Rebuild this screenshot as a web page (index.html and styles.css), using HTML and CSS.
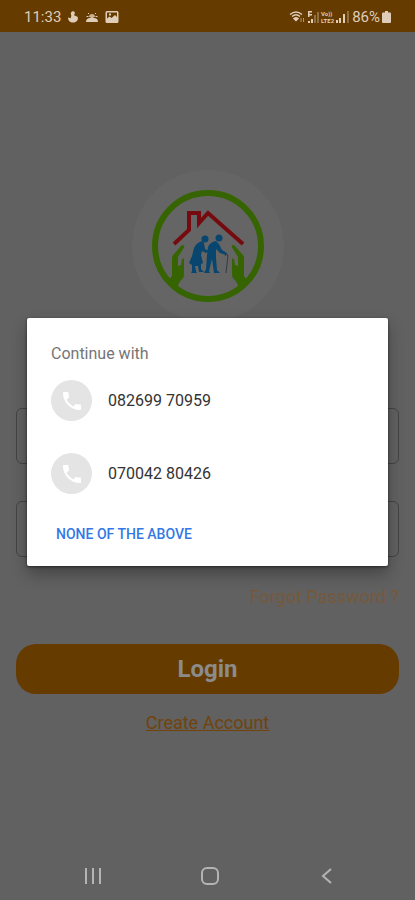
FILE: index.html
```html
<!DOCTYPE html>
<html lang="en">
<head>
<meta charset="utf-8">
<meta name="viewport" content="width=device-width, initial-scale=1">
<title>Login</title>
<link rel="stylesheet" href="styles.css">
</head>
<body>
<div class="screen">
  <header class="status">
    <div class="status-group">
      <span>11:33</span>
      <svg width="12" height="14" viewBox="0 0 12 14" fill="currentColor"><path d="M5 1.500c2-.8 3.400.8 2.700 2.300L7 5.300l3.500 1.400c1.400 3-1 5.800-4.300 5.800C3 12.500 1 10.500 1 7.500l2.600.7.8-2.500C3.600 4.500 3.500 2.300 5 1.500z"/></svg>
      <svg width="14" height="14" viewBox="0 0 14 14" fill="currentColor"><path d="M1 12c0-3 2-4 4-4 1-1.500 3-1.500 4 0 2.500 0 4 1.500 4 4z"/><path d="M4 7a3 3 0 0 1 6 0" opacity=".8"/><path d="M1.500 6.500h2M10.500 6.500h2M3 3l1 1M11 3l-1 1" stroke="currentColor"/></svg>
      <svg width="14" height="14" viewBox="0 0 14 14"><path fill="currentColor" fill-rule="evenodd" d="M2 1h10q1.500 0 1.500 1.500v9Q13.500 13 12 13H2Q.5 13 .5 11.500v-9Q.5 1 2 1zm0 1.500v6l2.500-2 2 1.500L10 5l2 2V2.500zm2 1h2v2H4z"/></svg>
    </div>
    <div class="status-group status-right">
      <svg width="16" height="14" viewBox="0 0 16 14" fill="none" stroke="currentColor" stroke-width="1.500"><path d="M1 4.500q6-5 12 0M3 6.500q4-3.500 8 0"/><path d="M5 8.500q2-1.500 4 0l-2 2z" fill="currentColor"/><path d="M12 8v4M14.500 8v4" stroke-width="1" opacity=".6"/></svg>
      <svg width="12" height="14" viewBox="0 0 12 14" fill="currentColor"><path d="M1 1h4v1.500H2.500V4H5v1.500H2.500V7H1zM1 11h2v2H1zM4 9h2v4H4z"/><path d="M7 5h2v8H7zM10 2h2v11h-2z" opacity=".35"/></svg>
      <span class="volte"><span>Vo))</span><span>LTE2</span></span>
      <svg width="14" height="14" viewBox="0 0 14 14" fill="currentColor"><path d="M0 10h2v3H0zM3 8h2v5H3zM7 4h2v9H7z"/><path d="M11 1h2v12h-2z" opacity=".35"/></svg>
      <span>86%</span>
      <svg width="9" height="14" viewBox="0 0 9 14" fill="currentColor"><path d="M3 1h3v1.500h2q1 0 1 1V12q0 1-1 1H1q-1 0-1-1V3.500q0-1 1-1h2z"/></svg>
    </div>
  </header>

  <main class="page">
    <div class="logo">
      <svg width="112" height="112" viewBox="0 0 112 112" role="img" aria-label="Elder care home">
        <circle cx="56" cy="56" r="53" fill="none" stroke="#356400" stroke-width="6"/>
        <path d="M22 54 37 40V23h10v10l9-10 35 31M46 33l4-4" fill="none" stroke="#760b0f" stroke-width="4"/>
        <g fill="#356400"><path id="hand" d="M17 90 20 86V68q0-3 3-5l6-7q2-2 3 0 1 1-1 3l-5 8v9l3-1 1-6q2-2 2 1v14q0 4-3 6l-3 5 1 5z"/><use href="#hand" transform="matrix(-1 0 0 1 112 0)"/></g>
        <g fill="#08466f">
          <circle cx="53" cy="49" r="3.500"/>
          <path d="M50 51q-6 2-8 7l-2 8-3 7 3 2v6l-1 2h6l-1-2-1-5h3l1 6h5l-3-3v-5l2-1-2-8 1-4 4 2 3-2-4-2-1-6z"/>
          <circle cx="67" cy="48" r="3.500"/>
          <path d="M64 51q-6 1-8 6l-1 8-1 14-2 4h6l-1-2 3-12 2 14h6l-3-3-1-12v-9l4 4 6 2 1-2-5-3-3-6z"/>
        </g>
        <path d="M73 66q1-3 3-1l-2 18" fill="none" stroke="#343c42" stroke-width="1"/>
      </svg>
    </div>
    <form class="form">
      <input class="field" type="tel" aria-label="Mobile number">
      <input class="field" type="password" aria-label="Password">
      <a class="forgot" href="#">Forgot Password ?</a>
      <button class="login" type="button">Login</button>
      <a class="create" href="#">Create Account</a>
    </form>
  </main>

  <nav class="navbar">
    <button type="button" aria-label="Recent apps"><svg width="20" height="20" viewBox="0 0 20 20" fill="none" stroke="currentColor" stroke-width="2"><path d="M3 2v16M10 2v16M17 2v16"/></svg></button>
    <button type="button" aria-label="Home"><svg width="20" height="20" viewBox="0 0 20 20" fill="none" stroke="currentColor" stroke-width="2"><rect x="2" y="2" width="16" height="16" rx="5"/></svg></button>
    <button type="button" aria-label="Back"><svg width="20" height="20" viewBox="0 0 20 20" fill="none" stroke="currentColor" stroke-width="2"><path d="m14 3-8 7 8 7"/></svg></button>
  </nav>

  <div class="overlay">
    <section class="dialog" role="dialog" aria-labelledby="dialog-title">
      <h1 class="dialog-title" id="dialog-title">Continue with</h1>
      <div class="numbers">
        <button class="number" type="button">
          <span class="avatar"><svg width="24" height="24" viewBox="0 0 24 24" fill="#fff"><path d="M6.600 10.800c1.400 2.800 3.800 5.100 6.600 6.600l2.200-2.200c.3-.3.7-.4 1-.2 1.100.4 2.300.6 3.600.6.600 0 1 .4 1 1V20c0 .6-.4 1-1 1C10.600 21 3 13.400 3 4c0-.6.4-1 1-1h3.500c.6 0 1 .4 1 1 0 1.300.2 2.500.6 3.600.1.300 0 .7-.2 1z"/></svg></span>
          082699 70959
        </button>
        <button class="number" type="button">
          <span class="avatar"><svg width="24" height="24" viewBox="0 0 24 24" fill="#fff"><path d="M6.600 10.800c1.400 2.800 3.800 5.100 6.600 6.600l2.200-2.200c.3-.3.7-.4 1-.2 1.100.4 2.300.6 3.600.6.600 0 1 .4 1 1V20c0 .6-.4 1-1 1C10.600 21 3 13.400 3 4c0-.6.4-1 1-1h3.500c.6 0 1 .4 1 1 0 1.300.2 2.500.6 3.600.1.300 0 .7-.2 1z"/></svg></span>
          070042 80426
        </button>
      </div>
      <button class="none" type="button">NONE OF THE ABOVE</button>
    </section>
  </div>
</div>
</body>
</html>
```
FILE: styles.css
```css
* {
  box-sizing: border-box;
}

body {
  margin: 0;
  background: #616161;
  font-family: Roboto, "Liberation Sans", sans-serif;
}

button {
  padding: 0;
  border: 0;
  background: none;
  font: inherit;
  color: inherit;
}

svg {
  display: block;
}

.screen {
  position: relative;
  display: grid;
  grid-template-rows: 32px 1fr 48px;
  min-height: 100vh;
}

.status {
  display: flex;
  align-items: center;
  justify-content: space-between;
  padding: 2px 24px 0;
  background: #653b00;
  color: #dfcdb9;
  font-size: 15px;
}

.status-group {
  display: flex;
  align-items: center;
  gap: 6px;
}

.status-right {
  gap: 2px;
}

.volte {
  display: grid;
  font-size: 6px;
  font-weight: 700;
  line-height: 7px;
}

.page {
  display: flex;
  flex-direction: column;
  align-items: center;
  padding: 138px 16px 0;
}

.logo {
  display: grid;
  place-items: center;
  width: 152px;
  height: 152px;
  border-radius: 50%;
  background: #656565;
}

.form {
  display: flex;
  flex-direction: column;
  align-self: stretch;
  margin-top: 86px;
}

.field {
  width: 100%;
  height: 56px;
  margin-bottom: 37px;
  padding: 0 16px;
  border: 1px solid #444;
  border-radius: 6px;
  background: transparent;
  font: inherit;
}

.forgot {
  align-self: flex-end;
  margin-top: -9px;
  font-size: 18px;
  line-height: 24px;
  color: #76593b;
  text-decoration: none;
}

.login {
  height: 50px;
  margin-top: 35px;
  border-radius: 20px;
  background: #653b00;
  font-size: 24px;
  font-weight: 700;
  color: #8b8b8b;
}

.create {
  align-self: center;
  margin-top: 17px;
  font-size: 18px;
  line-height: 24px;
  color: #71430b;
}

.navbar {
  display: flex;
  align-items: center;
  justify-content: space-around;
  padding: 0 30px 0 34px;
  color: #b4b4b4;
}

.overlay {
  position: absolute;
  inset: 32px 0 48px;
  display: grid;
  align-items: center;
  padding: 0 27px;
}

.dialog {
  padding: 24px 24px 20px;
  border-radius: 2px;
  background: #fff;
  box-shadow: 0 8px 16px rgba(0, 0, 0, 0.3), 0 1px 3px rgba(0, 0, 0, 0.5);
}

.dialog-title {
  margin: 0;
  font-size: 16px;
  font-weight: 400;
  line-height: 24px;
  color: #757575;
}

.numbers {
  display: grid;
  gap: 32px;
  margin-top: 14px;
}

.number {
  display: flex;
  align-items: center;
  gap: 16px;
  font-size: 16px;
  color: #333;
}

.avatar {
  display: grid;
  place-items: center;
  width: 41px;
  height: 41px;
  border-radius: 50%;
  background: #e4e4e4;
}

.none {
  display: block;
  margin-top: 28px;
  padding: 0 5px;
  font-size: 14px;
  font-weight: 500;
  line-height: 24px;
  color: #3478e5;
}
```
